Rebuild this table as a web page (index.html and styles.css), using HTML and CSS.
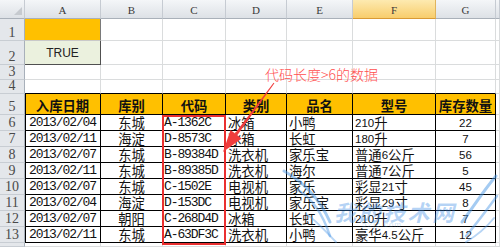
FILE: index.html
```html
<!DOCTYPE html>
<html lang="zh">
<head>
<meta charset="utf-8">
<link rel="stylesheet" href="styles.css">
</head>
<body>
<div class="sheet">
  <div class="row hdr">
    <div class="corner"></div><div>A</div><div>B</div><div>C</div><div>D</div><div>E</div><div class="sel">F</div><div>G</div><div></div>
  </div>
  <div class="row r1">
    <div class="rh">1</div><div class="a1"></div><div></div><div></div><div></div><div></div><div></div><div></div><div></div>
  </div>
  <div class="row r2">
    <div class="rh">2</div><div class="a2">TRUE</div><div></div><div></div><div></div><div></div><div></div><div></div><div></div>
  </div>
  <div class="row r3">
    <div class="rh">3</div><div></div><div></div><div></div><div></div><div></div><div></div><div></div><div></div>
  </div>
  <div class="row r4">
    <div class="rh">4</div><div class="tt"></div><div class="tt"></div><div class="tt"></div><div class="tt"></div><div class="tt"></div><div class="tt"></div><div class="tt"></div><div></div>
  </div>
  <div class="row r5">
    <div class="rh">5</div><div class="t tl th">入库日期</div><div class="t th">库别</div><div class="t th">代码</div><div class="t th">类别</div><div class="t th">品名</div><div class="t th">型号</div><div class="t th">库存数量</div><div></div>
  </div>
  <div class="row rd">
    <div class="rh">6</div><div class="t tl d">2013/02/04</div><div class="t z">东城</div><div class="t d l">A-1362C</div><div class="t z l">冰箱</div><div class="t z l">小鸭</div><div class="t z l"><span class="n">210</span>升</div><div class="t g">22</div><div></div>
  </div>
  <div class="row rd">
    <div class="rh">7</div><div class="t tl d">2013/02/11</div><div class="t z">海淀</div><div class="t d l">D-8573C</div><div class="t z l">冰箱</div><div class="t z l">长虹</div><div class="t z l"><span class="n">180</span>升</div><div class="t g">7</div><div></div>
  </div>
  <div class="row rd">
    <div class="rh">8</div><div class="t tl d">2013/02/07</div><div class="t z">东城</div><div class="t d l">B-89384D</div><div class="t z l">洗衣机</div><div class="t z l">家乐宝</div><div class="t z l">普通<span class="n">6</span>公斤</div><div class="t g">56</div><div></div>
  </div>
  <div class="row rd">
    <div class="rh">9</div><div class="t tl d">2013/02/11</div><div class="t z">东城</div><div class="t d l">B-89385D</div><div class="t z l">洗衣机</div><div class="t z l">海尔</div><div class="t z l">普通<span class="n">7</span>公斤</div><div class="t g">5</div><div></div>
  </div>
  <div class="row rd">
    <div class="rh">10</div><div class="t tl d">2013/02/07</div><div class="t z">东城</div><div class="t d l">C-1502E</div><div class="t z l">电视机</div><div class="t z l">家乐</div><div class="t z l">彩显<span class="n">21</span>寸</div><div class="t g">45</div><div></div>
  </div>
  <div class="row rd">
    <div class="rh">11</div><div class="t tl d">2013/02/04</div><div class="t z">海淀</div><div class="t d l">D-153DC</div><div class="t z l">电视机</div><div class="t z l">家乐宝</div><div class="t z l">彩显<span class="n">29</span>寸</div><div class="t g">8</div><div></div>
  </div>
  <div class="row rd">
    <div class="rh">12</div><div class="t tl d">2013/02/07</div><div class="t z">朝阳</div><div class="t d l">C-268D4D</div><div class="t z l">冰箱</div><div class="t z l">长虹</div><div class="t z l"><span class="n">210</span>升</div><div class="t g">7</div><div></div>
  </div>
  <div class="row rd">
    <div class="rh">13</div><div class="t tl d">2013/02/11</div><div class="t z">东城</div><div class="t d l">A-63DF3C</div><div class="t z l">洗衣机</div><div class="t z l">小鸭</div><div class="t z l">豪华<span class="n">4.5</span>公斤</div><div class="t g">12</div><div></div>
  </div>
  <div class="row r14">
    <div class="rh"></div><div></div><div></div><div></div><div></div><div></div><div></div><div></div><div></div>
  </div>
</div>

<div class="annot">代码长度&gt;6的数据</div>
<div class="hl"></div>
<svg class="arrow" width="500" height="247" viewBox="0 0 500 247">
  <polygon points="274.4,83.3 273.6,82.7 234.9,133.4 237.3,135.2" fill="#f03c3c"/>
  <polygon points="241.7,138.5 230.5,130.1 223,152" fill="#f03c3c"/>
</svg>
<svg class="wings" width="500" height="247" viewBox="0 0 500 247">
  <g fill="none" stroke="#4a97e6" stroke-linecap="round">
    <path d="M284 171 C300 180 318 195 330 222" stroke-width="3" opacity=".5"/>
    <path d="M298 190 C312 198 322 212 330 236" stroke-width="2.5" opacity=".45"/>
    <path d="M306 214 C316 220 324 230 336 242" stroke-width="2" opacity=".4"/>
    <path d="M496 176 C484 190 474 206 462 222" stroke-width="3" opacity=".5"/>
    <path d="M497 196 C488 208 478 222 466 236" stroke-width="2.5" opacity=".45"/>
    <path d="M494 218 C486 228 476 236 466 242" stroke-width="2" opacity=".4"/>
  </g>
</svg>
<div class="wm">我的技术网</div>
<div class="wm2">52jc.com</div>
</body>
</html>
```

FILE: styles.css
```css
* { box-sizing: border-box; margin: 0; padding: 0; }
body {
  width: 500px;
  height: 247px;
  overflow: hidden;
  background: #fff;
  position: relative;
  font-family: "Liberation Sans", "Noto Sans CJK SC", sans-serif;
}
.sheet { display: flex; flex-direction: column; }
.row {
  display: grid;
  grid-template-columns: 25px 76px 62px 63px 61px 66px 83px 60px 4px;
}
.row > div {
  border-right: 1px solid #dadcdd;
  border-bottom: 1px solid #dadcdd;
  display: flex;
  align-items: flex-end;
  justify-content: center;
  white-space: nowrap;
  overflow: visible;
  color: #111;
}
.hdr { height: 19px; }
.r1 { height: 22px; }
.r2 { height: 24px; }
.r3 { height: 15px; }
.r4 { height: 14px; }
.r5 { height: 21px; }
.rd { height: 16px; }
.r14 { height: 4px; }

.hdr > div {
  background: linear-gradient(#f4f6f8, #dde1e6);
  border-right-color: #c6cbd2;
  border-bottom-color: #a9b0b9;
  align-items: center;
  padding-top: 2px;
  font: 11px/12px "Liberation Serif", serif;
  color: #3a3a3a;
}
.hdr > .sel {
  background: linear-gradient(#fdeab0, #f8cd6c);
  border-bottom-color: #d99a35;
  border-right-color: #e0b45c;
}
.hdr > .corner { position: relative; }
.corner::after {
  content: "";
  position: absolute;
  right: 2px;
  bottom: 3px;
  border-style: solid;
  border-width: 0 0 8px 8px;
  border-color: transparent transparent #c6cacf transparent;
}
.row > .rh {
  background: #e4e7eb;
  border-right-color: #a8b0ba;
  border-bottom-color: #c8cdd3;
  font: 14px/12px "Liberation Serif", serif;
  color: #4a4a4a;
  padding-bottom: 1px;
}
.row > .a1 { background: #ffc000; border-right-color: #7a7a7a; border-bottom-color: #c9c9c9; }
.row > .a2 {
  background: #ebf1de;
  border-right-color: #505050;
  border-bottom-color: #505050;
  align-items: center;
  font: 12px/14px "Liberation Sans", sans-serif;
  color: #222;
}
.row > .tt { border-bottom-color: #000; }
.row > .t { border-right-color: #000; border-bottom-color: #000; }
.row > .tl { box-shadow: inset 1px 0 #000; }
.row > .th {
  background: #ffc000;
  font: bold 13.33px/15px "Noto Sans CJK SC", sans-serif;
  padding-bottom: 1px;
}
.row > .d {
  font: 13px/14px "Liberation Mono", monospace;
  letter-spacing: -1.1px;
}
.row > .z {
  font: 13.33px/14px "Noto Sans CJK SC", sans-serif;
}
.row > .l { justify-content: flex-start; padding-left: 2px; }
.row > .d.l { padding-left: 1px; }
.n { font: 11.5px/14px "Liberation Sans", sans-serif; letter-spacing: 0; }
.row > .g { font: 11.5px/14px "Liberation Sans", sans-serif; }

.annot {
  position: absolute;
  left: 265px;
  top: 65px;
  font: 300 14px/18px "Noto Sans CJK SC", sans-serif;
  color: #ff4f4f;
  white-space: nowrap;
}
.hl {
  position: absolute;
  left: 162px;
  top: 115px;
  width: 64px;
  height: 130px;
  border: 2px solid #ea3030;
}
.arrow, .wings {
  position: absolute;
  left: 0;
  top: 0;
  pointer-events: none;
}
.wm {
  position: absolute;
  left: 334px;
  top: 198px;
  font: italic bold 22px/26px "Noto Sans CJK SC", sans-serif;
  letter-spacing: 2.5px;
  color: rgba(60, 140, 230, 0.38);
  white-space: nowrap;
}
.wm2 {
  position: absolute;
  left: 362px;
  top: 220px;
  font: 8px/10px "Liberation Sans", sans-serif;
  color: rgba(80, 150, 225, 0.3);
  letter-spacing: 1px;
}
```
